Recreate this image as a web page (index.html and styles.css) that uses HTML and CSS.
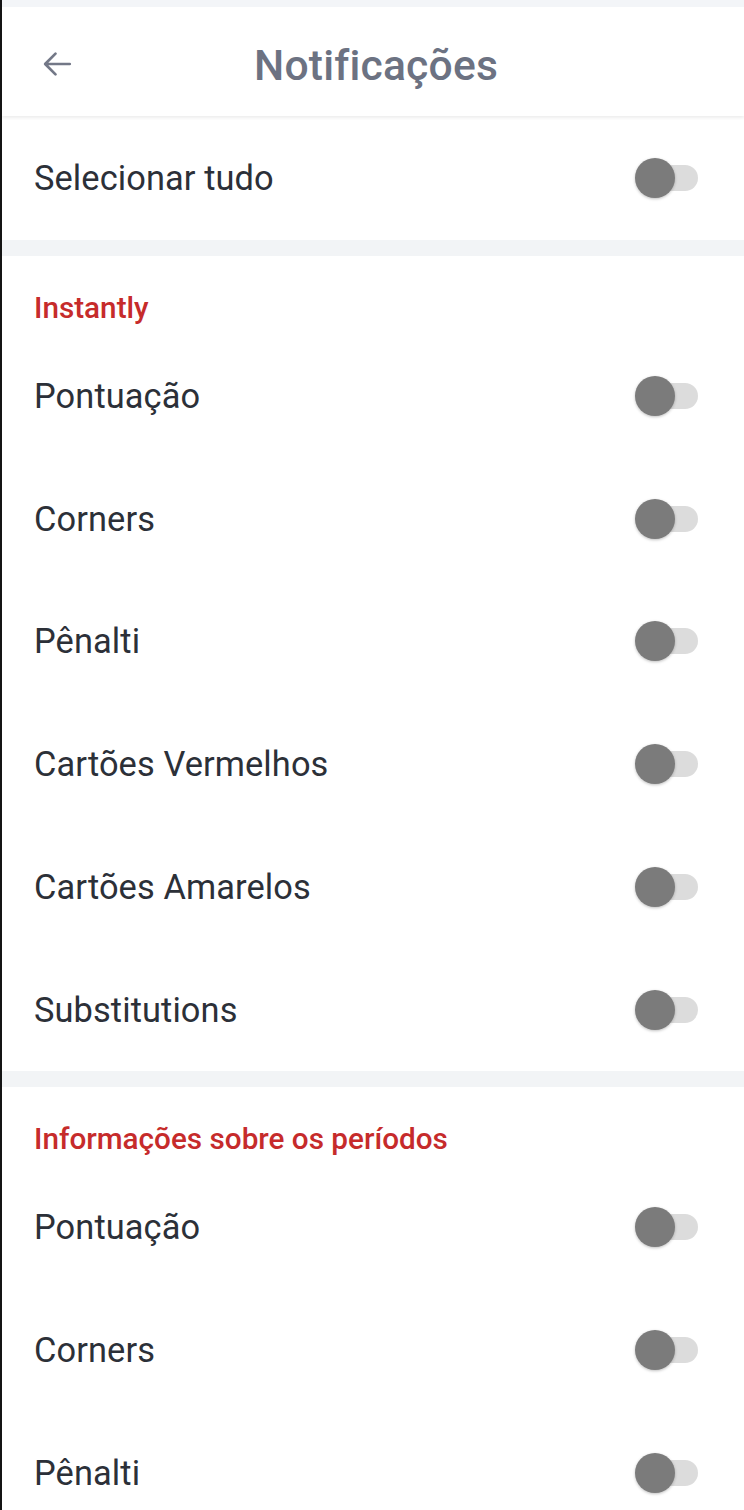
FILE: index.html
```html
<!DOCTYPE html>
<html lang="pt">
<head>
<meta charset="utf-8">
<title>Notificações</title>
<link rel="stylesheet" href="styles.css">
</head>
<body>
<div class="screen">
  <div class="topstrip"></div>
  <header class="appbar">
    <button class="back" aria-label="Voltar">
      <svg width="36" height="36" viewBox="0 0 24 24"><path d="M20.5 12H4.3M11 5.1 4.1 12l6.9 6.9" fill="none" stroke="#737887" stroke-width="1.8" stroke-linecap="round" stroke-linejoin="round"/></svg>
    </button>
    <h1 class="title">Notificações</h1>
  </header>

  <section class="group first">
    <div class="row"><span class="label">Selecionar tudo</span><span class="toggle"></span></div>
  </section>

  <div class="band"></div>

  <section class="group">
    <div class="section-title">Instantly</div>
    <div class="row"><span class="label">Pontuação</span><span class="toggle"></span></div>
    <div class="row"><span class="label">Corners</span><span class="toggle"></span></div>
    <div class="row"><span class="label">Pênalti</span><span class="toggle"></span></div>
    <div class="row"><span class="label">Cartões Vermelhos</span><span class="toggle"></span></div>
    <div class="row"><span class="label">Cartões Amarelos</span><span class="toggle"></span></div>
    <div class="row"><span class="label">Substitutions</span><span class="toggle"></span></div>
  </section>

  <div class="band"></div>

  <section class="group">
    <div class="section-title">Informações sobre os períodos</div>
    <div class="row"><span class="label">Pontuação</span><span class="toggle"></span></div>
    <div class="row"><span class="label">Corners</span><span class="toggle"></span></div>
    <div class="row"><span class="label">Pênalti</span><span class="toggle"></span></div>
  </section>
</div>
</body>
</html>
```

FILE: styles.css
```css
html, body {
  margin: 0;
  padding: 0;
  background: #ffffff;
}

body {
  font-family: Roboto, "Noto Sans", "Liberation Sans", sans-serif;
  -webkit-font-smoothing: antialiased;
}

.screen {
  width: 744px;
  height: 1510px;
  box-sizing: border-box;
  border-left: 2px solid #141414;
  background: #ffffff;
  overflow: hidden;
}

.topstrip {
  height: 7px;
  background: #f3f5f8;
}

.appbar {
  height: 109px;
  display: flex;
  align-items: center;
  justify-content: center;
  position: relative;
  background: #ffffff;
  box-shadow: 0 2px 3px rgba(0, 0, 0, 0.07);
  z-index: 1;
}

.back {
  position: absolute;
  left: 35px;
  top: 37px;
  width: 40px;
  height: 40px;
  padding: 0;
  border: 0;
  background: none;
  display: flex;
  align-items: center;
  justify-content: center;
}

.title {
  margin: 0;
  font-size: 42.6px;
  font-weight: 500;
  color: #6c7282;
  letter-spacing: 0.2px;
  transform: translateY(3px);
  padding-left: 6px;
}

.group {
  padding: 0 0 0 32px;
}

.group.first .row {
  height: 124px;
}

.band {
  height: 16px;
  background: #f2f4f6;
}

.section-title {
  height: 78.5px;
  box-sizing: border-box;
  padding-top: 34px;
  font-size: 29.7px;
  line-height: 36px;
  font-weight: 500;
  color: #c62b2b;
}

.row {
  height: 122.8px;
  display: flex;
  align-items: center;
  justify-content: space-between;
  padding-right: 46px;
}

.label {
  font-size: 34.4px;
  color: #2c3038;
  letter-spacing: 0.1px;
}

.toggle {
  position: relative;
  width: 62px;
  height: 26px;
  border-radius: 13px;
  background: #dcdcdc;
}

.toggle::before {
  content: "";
  position: absolute;
  left: -1px;
  top: -7px;
  width: 40px;
  height: 40px;
  border-radius: 50%;
  background: #7b7b7b;
  box-shadow: 0 1px 3px rgba(0, 0, 0, 0.25);
}
```
